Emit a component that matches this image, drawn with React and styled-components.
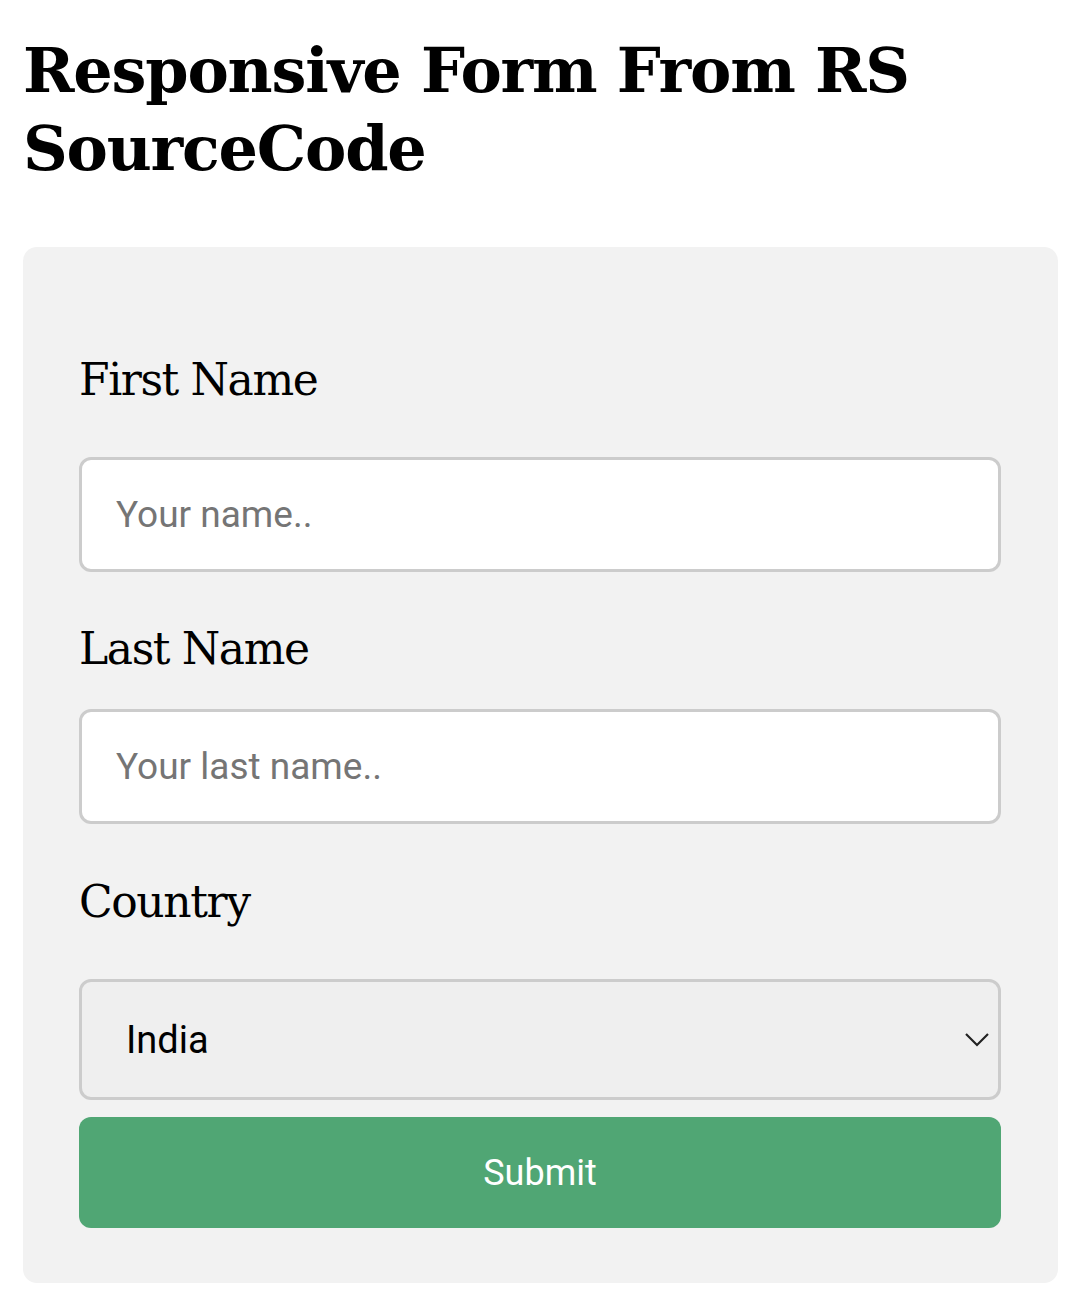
import React from "react";
import styled, { createGlobalStyle } from "styled-components";

const Global = createGlobalStyle`
  html, body { margin: 0; padding: 0; background: #ffffff; }
  body { font-family: "DejaVu Serif", serif; color: #000; }
  * { box-sizing: border-box; }
`;

const Page = styled.div`
  padding: 0 22px 30px 23px;
`;

const Title = styled.h1`
  margin: 0;
  padding-top: 32px;
  font-family: "DejaVu Serif", serif;
  font-weight: 700;
  font-size: 62px;
  line-height: 78px;
  letter-spacing: -1.2px;
  color: #000;
`;

const Card = styled.form`
  margin-top: 59px;
  background: #f2f2f2;
  border-radius: 14px;
  padding: 103px 57px 55px 56px;
  display: flex;
  flex-direction: column;
`;

const Field = styled.div`
  display: flex;
  flex-direction: column;
  margin-bottom: ${(p) => p.$after}px;
`;

const Label = styled.label`
  font-family: "DejaVu Serif", serif;
  font-size: 44px;
  line-height: 60px;
  letter-spacing: -1.4px;
  color: #000;
  margin-bottom: ${(p) => p.$gap}px;
`;

const TextInput = styled.input`
  width: 100%;
  height: 115px;
  border: 3px solid #cccccc;
  border-radius: 12px;
  background: #ffffff;
  padding: 0 34px;
  font-family: Roboto, "Noto Sans", sans-serif;
  font-size: 37px;
  color: #000;
  outline: none;
  &::placeholder { color: #757575; }
`;

const SelectWrap = styled.div`
  position: relative;
  width: 100%;
`;

const Select = styled.select`
  display: block;
  width: 100%;
  height: 121px;
  border: 3px solid #cccccc;
  border-radius: 12px;
  background: #efefef;
  padding: 0 44px;
  font-family: Roboto, "Noto Sans", sans-serif;
  font-size: 38px;
  color: #000;
  appearance: none;
  -webkit-appearance: none;
  outline: none;
`;

const Chevron = styled.svg`
  position: absolute;
  right: 12px;
  top: 54px;
  width: 24px;
  height: 14px;
  pointer-events: none;
`;

const Submit = styled.button`
  margin-top: 17px;
  width: 100%;
  height: 111px;
  border: none;
  border-radius: 12px;
  background: #50a674;
  color: #ffffff;
  font-family: Roboto, "Noto Sans", sans-serif;
  font-size: 36px;
  cursor: pointer;
`;

export default function App() {
  return (
    <>
      <Global />
      <Page>
        <Title>Responsive Form From RS SourceCode</Title>
        <Card onSubmit={(e) => e.preventDefault()}>
          <Field $after={47}>
            <Label $gap={47} htmlFor="fname">First Name</Label>
            <TextInput id="fname" placeholder="Your name.." />
          </Field>
          <Field $after={48}>
            <Label $gap={30} htmlFor="lname">Last Name</Label>
            <TextInput id="lname" placeholder="Your last name.." />
          </Field>
          <Field $after={0}>
            <Label $gap={47} htmlFor="country">Country</Label>
            <SelectWrap>
              <Select id="country" defaultValue="india">
                <option value="india">India</option>
                <option value="canada">Canada</option>
                <option value="usa">USA</option>
              </Select>
              <Chevron viewBox="0 0 24 14">
                <path d="M1 1 L12 12 L23 1" fill="none" stroke="#222" strokeWidth="2.2" />
              </Chevron>
            </SelectWrap>
          </Field>
          <Submit type="submit">Submit</Submit>
        </Card>
      </Page>
    </>
  );
}
